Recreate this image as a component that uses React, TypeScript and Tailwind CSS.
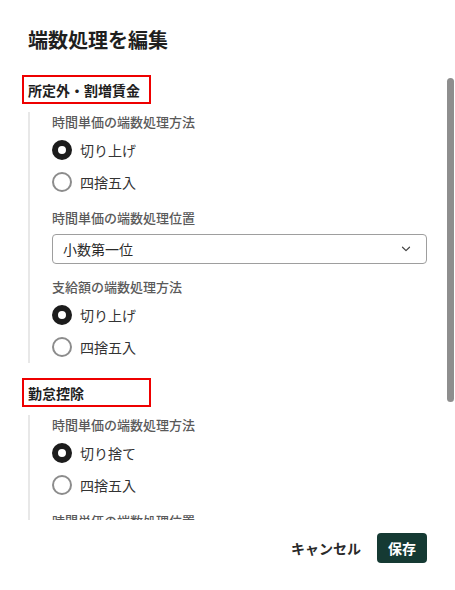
import React from "react";

type Opt = { label: string; checked: boolean };

function Radio({ label, checked }: Opt) {
  return (
    <div className="flex h-[32px] items-center gap-[8px]">
      {checked ? (
        <span className="box-border h-[20px] w-[20px] rounded-full border-[6px] border-[#1c1c1c] bg-white" />
      ) : (
        <span className="box-border h-[20px] w-[20px] rounded-full border-2 border-[#8c8c8c] bg-white" />
      )}
      <span className="text-[14px] leading-[20px] text-[#333333]">{label}</span>
    </div>
  );
}

function FieldLabel({ children }: { children: React.ReactNode }) {
  return (
    <div className="text-[13px] font-medium leading-[20px] text-[#5a5a5a]">{children}</div>
  );
}

function SectionHeading({ children }: { children: React.ReactNode }) {
  return (
    <div className="box-border flex h-[29px] w-[129px] items-center border-2 border-[#ee0000] pl-[4px] text-[14px] font-bold leading-[20px] text-[#1f1f1f]">
      {children}
    </div>
  );
}

export default function App() {
  return (
    <div
      className="relative h-[590px] w-[455px] overflow-hidden bg-white"
      style={{ fontFamily: '"Noto Sans CJK JP", "Noto Sans", sans-serif' }}
    >
      <div className="px-7 pt-[26px] text-[20px] font-bold leading-[28px] text-[#1f1f1f]">
        端数処理を編集
      </div>

      <div className="relative mt-[16px] h-[450px]">
        <div className="h-full overflow-hidden pl-[22px] pr-7 pt-[5px]">
          <SectionHeading>所定外・割増賃金</SectionHeading>
          <div className="ml-[6px] mt-[8px] border-l-2 border-[#e8e8e8] pl-[22px]">
            <FieldLabel>時間単価の端数処理方法</FieldLabel>
            <div className="mt-[2px]">
              <Radio label="切り上げ" checked />
              <Radio label="四捨五入" checked={false} />
            </div>
            <div className="mt-[10px]">
              <FieldLabel>時間単価の端数処理位置</FieldLabel>
            </div>
            <div className="mt-[6px] box-border flex h-[30px] items-center justify-between rounded-[4px] border border-[#9e9e9e] pl-[10px] pr-[15px]">
              <span className="text-[14px] leading-[20px] text-[#2a2a2a]">小数第一位</span>
              <svg width="10" height="6" viewBox="0 0 10 6" fill="none">
                <path d="M1.5 1.2 L5 4.6 L8.5 1.2" stroke="#444" strokeWidth="1.2" strokeLinecap="round" strokeLinejoin="round" />
              </svg>
            </div>
            <div className="mt-[13px]">
              <FieldLabel>支給額の端数処理方法</FieldLabel>
            </div>
            <div className="mt-[2px]">
              <Radio label="切り上げ" checked />
              <Radio label="四捨五入" checked={false} />
            </div>
          </div>

          <div className="mt-[15px]">
            <SectionHeading>勤怠控除</SectionHeading>
          </div>
          <div className="ml-[6px] mt-[8px] border-l-2 border-[#e8e8e8] pl-[22px]">
            <FieldLabel>時間単価の端数処理方法</FieldLabel>
            <div className="mt-[2px]">
              <Radio label="切り捨て" checked />
              <Radio label="四捨五入" checked={false} />
            </div>
            <div className="mt-[10px]">
              <FieldLabel>時間単価の端数処理位置</FieldLabel>
            </div>
            <div className="mt-[6px] box-border flex h-[30px] items-center rounded-[4px] border border-[#9e9e9e] pl-[10px]">
              <span className="text-[14px] leading-[20px] text-[#2a2a2a]">小数第一位</span>
            </div>
          </div>
        </div>
        <div className="absolute right-[1px] top-[8px] h-[324px] w-[7px] rounded-full bg-[#8e8e8e]" />
      </div>

      <div className="flex items-center justify-end gap-[8px] px-7 pt-[13px]">
        <button className="h-[30px] px-2 text-[14px] font-bold leading-[20px] text-[#2a2a2a]">
          キャンセル
        </button>
        <button className="h-[30px] w-[50px] rounded-[4px] bg-[#153a33] text-[14px] font-bold leading-[20px] text-white">
          保存
        </button>
      </div>
    </div>
  );
}
